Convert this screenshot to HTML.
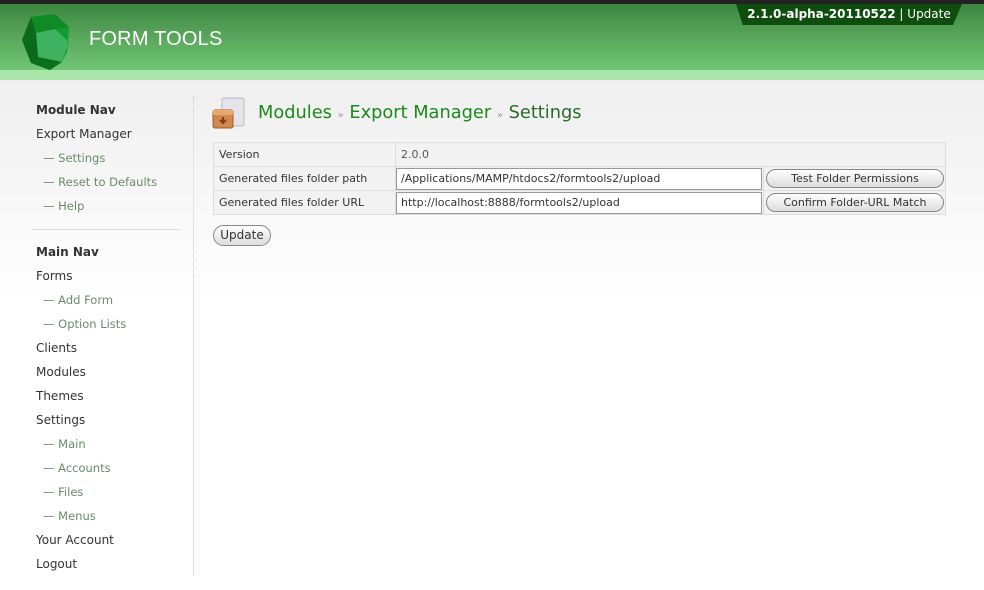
<!DOCTYPE html>
<html><head><meta charset="utf-8"><style>
*{margin:0;padding:0;box-sizing:border-box}
body{width:984px;height:590px;overflow:hidden;font-family:"DejaVu Sans",Verdana,sans-serif;background:linear-gradient(#efefef 80px,#fff 300px);position:relative;color:#333}
#hdr{position:absolute;left:0;top:0;width:984px;height:70px;background:linear-gradient(#3e8a42 4px,#4f9a52 20px,#6cc070 60px,#75c979 70px);border-top:4px solid #222}
#band{position:absolute;left:0;top:70px;width:984px;height:10px;background:#aae5aa}
#title{position:absolute;left:89px;top:28px;color:#fff;font-family:"Liberation Sans",sans-serif;font-size:20px;letter-spacing:0.2px}
#ver{position:absolute;left:736px;top:4px;width:226px;height:21px;background:#0e4d0e;clip-path:polygon(0 0,100% 0,96% 100%,3% 100%);color:#fff;font-size:12px;line-height:20px;text-align:center}
#nav{position:absolute;left:36px;top:100px;font-size:12px}
#nav div{height:24px;line-height:20px}
#nav .h{font-weight:bold}
#nav .s{color:#6b8a6b;font-size:11.5px;padding-left:7px}
#nav hr{border:0;border-top:1px solid #ddd;width:148px;margin:9px 0 12px -4px}
#vl{position:absolute;left:193px;top:96px;height:480px;border-left:1px dotted #ccc}
#crumb{position:absolute;left:258px;top:102px;font-size:17.8px;color:#1a8a1a}
#crumb span{color:#999;font-size:10px}
#crumb b{font-weight:normal;color:#2a6a2a}
table{position:absolute;left:213px;top:142px;width:733px;border-collapse:collapse;font-size:11px;border:1px solid #ccc}
td{height:24px;border:1px solid #ddd;padding:0 5px;background:#f2f2f2}
td.v{padding:0;background:#f2f2f2}
.in{display:inline-block;width:366px;height:22px;border:1px solid #999;background:#fff;line-height:20px;padding-left:4px;vertical-align:middle}
.bt{display:inline-block;border:1px solid #888;border-radius:11px;background:linear-gradient(#fff,#ddd);height:19px;line-height:17px;text-align:center;font-size:11px;vertical-align:middle}
</style></head><body>
<div id="hdr"></div><div id="band"></div>
<svg style="position:absolute;left:18px;top:10px" width="56" height="62" viewBox="18 10 56 62">
<polygon points="31,17 55,14 69,27 67,52 50,70 31,63 22,40" fill="#0f8a25"/>
<polygon points="36,33 55,29 69,42 62,62 38,57" fill="#3eb260"/>
<polygon points="22,40 31,17 36,33 38,57 31,63" fill="#086a1a"/>
<polygon points="38,57 62,62 50,70 31,63" fill="#0a6f1e"/>
<polygon points="55,29 69,27 67,52 62,62 69,42" fill="#139a30"/>
</svg>
<div id="title">FORM TOOLS</div>
<div id="ver"><b>2.1.0-alpha-20110522</b> | Update</div>
<div id="nav">
<div class="h">Module Nav</div><div>Export Manager</div>
<div class="s">— Settings</div><div class="s">— Reset to Defaults</div><div class="s">— Help</div>
<hr>
<div class="h">Main Nav</div><div>Forms</div><div class="s">— Add Form</div><div class="s">— Option Lists</div>
<div>Clients</div><div>Modules</div><div>Themes</div><div>Settings</div>
<div class="s">— Main</div><div class="s">— Accounts</div><div class="s">— Files</div><div class="s">— Menus</div>
<div>Your Account</div><div>Logout</div>
</div>
<div id="vl"></div>
<svg style="position:absolute;left:210px;top:96px" width="40" height="36">
<rect x="12" y="2" width="22" height="28" rx="2" fill="#e4e4ea" stroke="#bbb"/>
<rect x="3" y="14" width="20" height="18" rx="2" fill="#d08850" stroke="#a05a2a"/>
<rect x="3" y="14" width="20" height="5" fill="#e8a870"/>
<path d="M13 21v6M10 24l3 3 3-3" stroke="#8a3a10" stroke-width="2" fill="none"/>
</svg>
<div id="crumb">Modules <span>»</span> Export Manager <span>»</span> <b>Settings</b></div>
<table>
<tr><td style="width:182px">Version</td><td colspan="2" style="color:#555">2.0.0</td></tr>
<tr><td>Generated files folder path</td><td class="v" style="width:368px"><span class="in">/Applications/MAMP/htdocs2/formtools2/upload</span></td><td class="v" style="padding-left:2px"><span class="bt" style="width:178px">Test Folder Permissions</span></td></tr>
<tr><td>Generated files folder URL</td><td class="v"><span class="in">http://localhost:8888/formtools2/upload</span></td><td class="v" style="padding-left:2px"><span class="bt" style="width:178px">Confirm Folder-URL Match</span></td></tr>
</table>
<span class="bt" style="position:absolute;left:213px;top:225px;width:58px;height:21px;line-height:19px;font-size:12px">Update</span>
</body></html>
